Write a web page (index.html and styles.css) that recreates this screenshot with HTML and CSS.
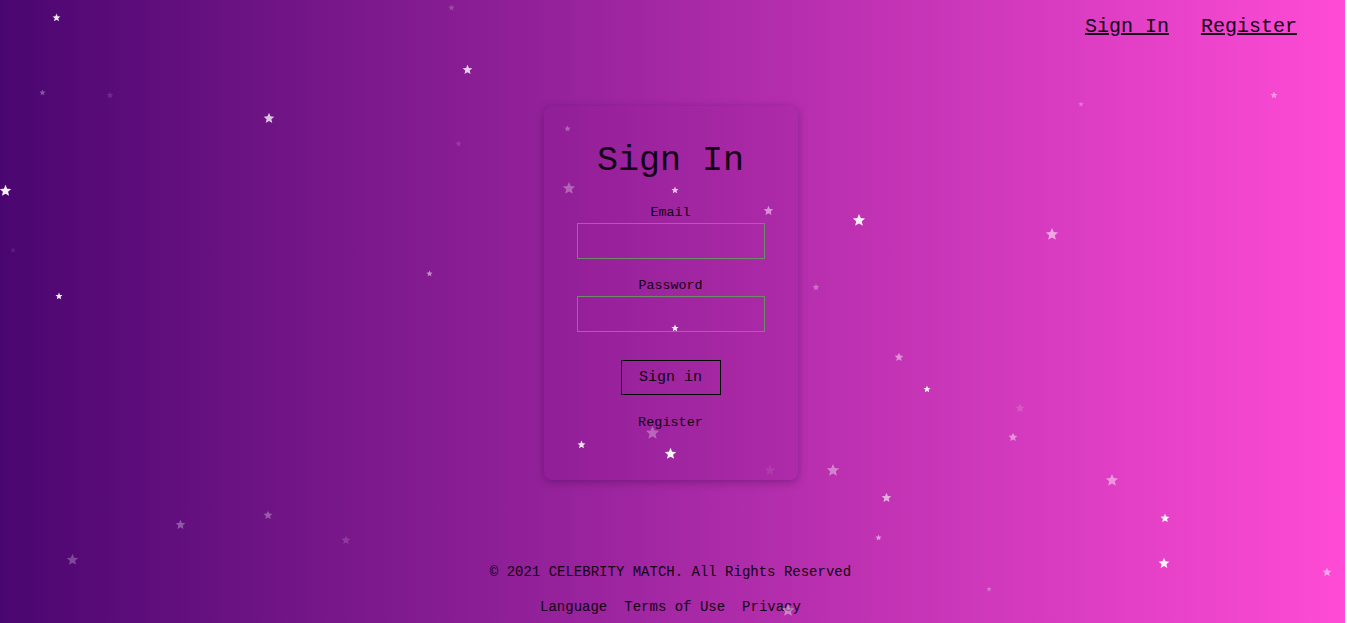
FILE: index.html
```html
<!DOCTYPE html>
<html lang="en">
<head>
<meta charset="utf-8">
<title>Sign In - Celebrity Match</title>
<link rel="stylesheet" href="styles.css">
</head>
<body>
<svg width="0" height="0" class="defs" aria-hidden="true">
  <defs>
    <symbol id="star" viewBox="0 0 24 24"><path d="M12 1.5l3 7.2 7.6.6-5.8 5 1.8 7.5L12 17.8l-6.6 4 1.8-7.5-5.8-5 7.6-.6z"/></symbol>
  </defs>
</svg>
<div class="page">
  <header class="topnav">
    <a href="#" class="navlink">Sign In</a>
    <a href="#" class="navlink">Register</a>
  </header>
  <main class="main">
    <form class="card">
      <h1 class="title">Sign In</h1>
      <label class="label" for="email">Email</label>
      <input class="field" id="email" type="email">
      <label class="label label-gap" for="password">Password</label>
      <input class="field" id="password" type="password">
      <button class="btn" type="button">Sign in</button>
      <a href="#" class="reglink">Register</a>
    </form>
  </main>
  <footer class="footer">
    <p class="copy">© 2021 CELEBRITY MATCH. All Rights Reserved</p>
    <nav class="footlinks">
      <a href="#">Language</a>
      <a href="#">Terms of Use</a>
      <a href="#">Privacy</a>
    </nav>
  </footer>
</div>
<div class="stars" aria-hidden="true">
  <svg class="star" style="left:52px;top:13px;width:9px;opacity:.9"><use href="#star"/></svg>
  <svg class="star" style="left:448px;top:4px;width:7px;opacity:.2"><use href="#star"/></svg>
  <svg class="star" style="left:462px;top:64px;width:11px;opacity:.8"><use href="#star"/></svg>
  <svg class="star" style="left:39px;top:89px;width:7px;opacity:.3"><use href="#star"/></svg>
  <svg class="star" style="left:106px;top:91px;width:8px;opacity:.12"><use href="#star"/></svg>
  <svg class="star" style="left:263px;top:112px;width:12px;opacity:.75"><use href="#star"/></svg>
  <svg class="star" style="left:564px;top:125px;width:7px;opacity:.3"><use href="#star"/></svg>
  <svg class="star" style="left:455px;top:140px;width:7px;opacity:.12"><use href="#star"/></svg>
  <svg class="star" style="left:-1px;top:184px;width:13px;opacity:.95"><use href="#star"/></svg>
  <svg class="star" style="left:562px;top:181px;width:14px;opacity:.3"><use href="#star"/></svg>
  <svg class="star" style="left:671px;top:186px;width:8px;opacity:.75"><use href="#star"/></svg>
  <svg class="star" style="left:763px;top:205px;width:11px;opacity:.5"><use href="#star"/></svg>
  <svg class="star" style="left:852px;top:213px;width:14px;opacity:.9"><use href="#star"/></svg>
  <svg class="star" style="left:1045px;top:227px;width:14px;opacity:.55"><use href="#star"/></svg>
  <svg class="star" style="left:1078px;top:101px;width:6px;opacity:.3"><use href="#star"/></svg>
  <svg class="star" style="left:1270px;top:91px;width:8px;opacity:.45"><use href="#star"/></svg>
  <svg class="star" style="left:10px;top:247px;width:6px;opacity:.1"><use href="#star"/></svg>
  <svg class="star" style="left:426px;top:270px;width:7px;opacity:.5"><use href="#star"/></svg>
  <svg class="star" style="left:55px;top:292px;width:8px;opacity:.95"><use href="#star"/></svg>
  <svg class="star" style="left:812px;top:283px;width:8px;opacity:.3"><use href="#star"/></svg>
  <svg class="star" style="left:671px;top:324px;width:8px;opacity:.95"><use href="#star"/></svg>
  <svg class="star" style="left:894px;top:352px;width:10px;opacity:.45"><use href="#star"/></svg>
  <svg class="star" style="left:923px;top:385px;width:8px;opacity:.9"><use href="#star"/></svg>
  <svg class="star" style="left:1015px;top:403px;width:10px;opacity:.15"><use href="#star"/></svg>
  <svg class="star" style="left:1008px;top:432px;width:10px;opacity:.45"><use href="#star"/></svg>
  <svg class="star" style="left:645px;top:425px;width:15px;opacity:.3"><use href="#star"/></svg>
  <svg class="star" style="left:577px;top:440px;width:9px;opacity:.9"><use href="#star"/></svg>
  <svg class="star" style="left:664px;top:447px;width:13px;opacity:.95"><use href="#star"/></svg>
  <svg class="star" style="left:764px;top:464px;width:12px;opacity:.08"><use href="#star"/></svg>
  <svg class="star" style="left:826px;top:463px;width:14px;opacity:.4"><use href="#star"/></svg>
  <svg class="star" style="left:1105px;top:473px;width:14px;opacity:.45"><use href="#star"/></svg>
  <svg class="star" style="left:881px;top:492px;width:11px;opacity:.6"><use href="#star"/></svg>
  <svg class="star" style="left:175px;top:519px;width:11px;opacity:.3"><use href="#star"/></svg>
  <svg class="star" style="left:263px;top:510px;width:10px;opacity:.3"><use href="#star"/></svg>
  <svg class="star" style="left:341px;top:535px;width:10px;opacity:.15"><use href="#star"/></svg>
  <svg class="star" style="left:66px;top:553px;width:13px;opacity:.25"><use href="#star"/></svg>
  <svg class="star" style="left:875px;top:534px;width:7px;opacity:.5"><use href="#star"/></svg>
  <svg class="star" style="left:1160px;top:513px;width:10px;opacity:.95"><use href="#star"/></svg>
  <svg class="star" style="left:1158px;top:557px;width:12px;opacity:.95"><use href="#star"/></svg>
  <svg class="star" style="left:986px;top:586px;width:6px;opacity:.3"><use href="#star"/></svg>
  <svg class="star" style="left:1322px;top:567px;width:10px;opacity:.5"><use href="#star"/></svg>
  <svg class="star" style="left:781px;top:603px;width:14px;opacity:.4"><use href="#star"/></svg>
</div>
</body>
</html>
```
FILE: styles.css
```css
* { box-sizing: border-box; }
html { background: #fff; }
html, body { margin: 0; padding: 0; height: 100%; }
body {
  width: calc(100% - 2px);
  font-family: "Courier New", "Nimbus Mono PS", "FreeMono", "Liberation Mono", monospace;
  color: #140014;
  background: linear-gradient(to right, #4a0670 0%, #a528a4 50%, #ff4bd6 100%);
  overflow: hidden;
  position: relative;
}
.defs { position: absolute; }
a { color: inherit; }
.page {
  height: 100vh;
  display: flex;
  flex-direction: column;
  padding-right: 4px;
}
.topnav {
  display: flex;
  justify-content: flex-end;
  gap: 32px;
  padding: 15px 44px 0 0;
}
.navlink {
  font-size: 20px;
  line-height: 24px;
  text-decoration: underline;
}
.main {
  flex: 1;
  display: flex;
  justify-content: center;
  align-items: flex-start;
  padding-top: 67px;
}
.card {
  width: 254px;
  padding: 35px 33px 49px;
  display: flex;
  flex-direction: column;
  align-items: center;
  border-radius: 8px;
  background: rgba(120, 20, 130, 0.12);
  box-shadow: 0 2px 8px rgba(40, 0, 60, 0.35);
}
.title {
  margin: 0 0 24px;
  font-size: 35px;
  line-height: 40px;
  font-weight: normal;
}
.label {
  font-size: 13.33px;
  line-height: 16px;
  margin-bottom: 2px;
}
.label-gap { margin-top: 19px; }
.field {
  width: 188px;
  height: 36px;
  background: transparent;
  border: 1px solid #6b8c66;
  font: inherit;
  outline: none;
}
.btn {
  margin-top: 28px;
  width: 100px;
  height: 35px;
  background: transparent;
  border: 1px solid #000;
  font-family: inherit;
  font-size: 15px;
  color: inherit;
  padding: 0;
}
.reglink {
  margin-top: 20px;
  font-size: 13.5px;
  line-height: 16px;
  text-decoration: none;
}
.footer {
  display: flex;
  flex-direction: column;
  align-items: center;
  padding-bottom: 8px;
  font-size: 14px;
  line-height: 16px;
}
.copy { margin: 0 0 19px; }
.footlinks {
  display: flex;
  gap: 17px;
}
.footlinks a { text-decoration: none; }
.stars {
  position: absolute;
  inset: 0;
  pointer-events: none;
}
.star {
  position: absolute;
  aspect-ratio: 1;
  height: auto;
  fill: #fff;
}
```
